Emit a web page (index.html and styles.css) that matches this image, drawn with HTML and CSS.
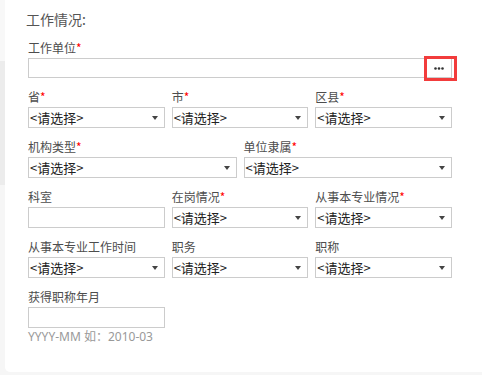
FILE: index.html
```html
<!DOCTYPE html>
<html lang="zh-CN">
<head>
<meta charset="utf-8">
<title>工作情况</title>
<link rel="stylesheet" href="styles.css">
</head>
<body>
<div class="page">
  <div class="rail"><div class="rail-top"></div><div class="rail-mid"></div></div>
  <div class="card">
    <h2 class="title">工作情况:</h2>

    <div class="field wide">
      <label class="lbl">工作单位<span class="req">*</span></label>
      <div class="input-group">
        <div class="input grow"></div>
        <button class="more" type="button">
          <svg width="10" height="3" viewBox="0 0 10 3"><circle cx="1.5" cy="1.5" r="1.3"/><circle cx="5" cy="1.5" r="1.3"/><circle cx="8.5" cy="1.5" r="1.3"/></svg>
        </button>
      </div>
    </div>

    <div class="row cols3">
      <div class="field"><label class="lbl">省<span class="req">*</span></label><div class="select">&lt;请选择&gt;</div></div>
      <div class="field"><label class="lbl">市<span class="req">*</span></label><div class="select">&lt;请选择&gt;</div></div>
      <div class="field"><label class="lbl">区县<span class="req">*</span></label><div class="select">&lt;请选择&gt;</div></div>
    </div>

    <div class="row cols2">
      <div class="field"><label class="lbl">机构类型<span class="req">*</span></label><div class="select">&lt;请选择&gt;</div></div>
      <div class="field"><label class="lbl">单位隶属<span class="req">*</span></label><div class="select">&lt;请选择&gt;</div></div>
    </div>

    <div class="row cols3">
      <div class="field"><label class="lbl">科室</label><div class="input"></div></div>
      <div class="field"><label class="lbl">在岗情况<span class="req">*</span></label><div class="select">&lt;请选择&gt;</div></div>
      <div class="field"><label class="lbl">从事本专业情况<span class="req">*</span></label><div class="select">&lt;请选择&gt;</div></div>
    </div>

    <div class="row cols3">
      <div class="field"><label class="lbl">从事本专业工作时间</label><div class="select">&lt;请选择&gt;</div></div>
      <div class="field"><label class="lbl">职务</label><div class="select">&lt;请选择&gt;</div></div>
      <div class="field"><label class="lbl">职称</label><div class="select">&lt;请选择&gt;</div></div>
    </div>

    <div class="row cols3">
      <div class="field">
        <label class="lbl">获得职称年月</label>
        <div class="input"></div>
        <div class="hint">YYYY-MM 如：2010-03</div>
      </div>
    </div>
  </div>
</div>
</body>
</html>
```

FILE: styles.css
```css
html, body {
  margin: 0;
  padding: 0;
}
body {
  width: 482px;
  height: 375px;
  overflow: hidden;
  background: #f6f6f6;
  font-family: "Noto Sans CJK SC", "Microsoft YaHei", sans-serif;
  color: #555;
}
.page {
  display: flex;
  height: 375px;
}
.rail {
  width: 5px;
  display: flex;
  flex-direction: column;
}
.rail-top {
  height: 61px;
  background: #f8f8f8;
}
.rail-mid {
  height: 124px;
  background: #ececec;
}
.card {
  flex: 1;
  height: 372px;
  background: #fff;
  border-bottom-left-radius: 5px;
  padding: 9px 0 0 23px;
  box-sizing: border-box;
}
.title {
  margin: 0 0 11px -2px;
  font-size: 14px;
  line-height: 20px;
  font-weight: normal;
  color: #555;
}
.row {
  display: grid;
  width: 424px;
  column-gap: 7px;
  margin-top: 11px;
}
.cols3 { grid-template-columns: repeat(3, 1fr); }
.cols2 { grid-template-columns: repeat(2, 1fr); }
.wide { width: 424px; }
.lbl {
  display: block;
  font-size: 12px;
  line-height: 16px;
  margin-bottom: 2px;
  color: #4d4d4d;
  white-space: nowrap;
}
.req {
  color: #f00;
}
.input, .select {
  box-sizing: border-box;
  height: 21px;
  border: 1px solid #ccc;
  background: #fff;
}
.input-group {
  display: flex;
  height: 20px;
  border: 1px solid #ccc;
  box-sizing: border-box;
}
.input-group .input {
  border: none;
  height: 18px;
}
.grow { flex: 1; }
.more {
  position: relative;
  width: 24px;
  height: 18px;
  padding: 0;
  margin: 0;
  border: none;
  background: #fff;
  display: flex;
  align-items: center;
  justify-content: center;
}
.more svg { fill: #333; display: block; }
.more::after {
  content: "";
  position: absolute;
  left: -3px;
  right: -6px;
  top: -3px;
  bottom: -4px;
  border: 3px solid #f23c3c;
}
.select {
  position: relative;
  font-size: 13px;
  line-height: 19px;
  padding-left: 1px;
  color: #222;
  white-space: nowrap;
}
.select::after {
  content: "";
  position: absolute;
  right: 6px;
  top: 8px;
  border-left: 3.5px solid transparent;
  border-right: 3.5px solid transparent;
  border-top: 4px solid #444;
}
.hint {
  font-family: "Noto Sans", "Noto Sans CJK SC", sans-serif;
  font-size: 12px;
  line-height: 16px;
  color: #999;
  margin-top: 1px;
  white-space: nowrap;
}
```
